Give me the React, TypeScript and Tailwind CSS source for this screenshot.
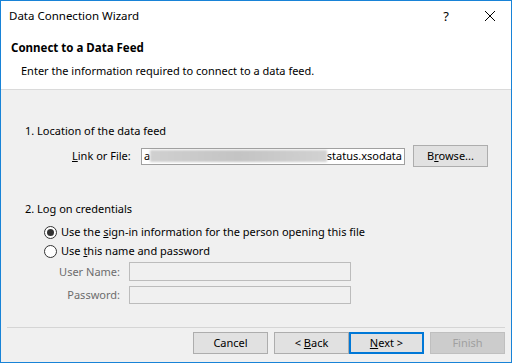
import React from 'react'

function Radio({ checked }: { checked?: boolean }) {
  return (
    <span className="flex h-[13px] w-[13px] items-center justify-center rounded-full border border-[#333333] bg-white">
      {checked && <span className="h-[7px] w-[7px] rounded-full bg-[#333333]" />}
    </span>
  )
}

function Btn({
  children,
  primary,
  disabled,
}: {
  children: React.ReactNode
  primary?: boolean
  disabled?: boolean
}) {
  return (
    <div
      className={
        disabled
          ? 'flex h-[22px] w-[75px] items-center justify-center border border-[#bfbfbf] bg-[#cccccc] text-[#a0a0a0]'
          : primary
            ? 'flex h-[22px] w-[75px] items-center justify-center border-2 border-[#0078d7] bg-[#e1e1e1]'
            : 'flex h-[22px] w-[75px] items-center justify-center border border-[#adadad] bg-[#e1e1e1]'
      }
    >
      <span>{children}</span>
    </div>
  )
}

export default function App() {
  return (
    <div
      className="flex h-[363px] w-[512px] flex-col border border-[#1883d7] bg-[#f0f0f0] text-[11px] leading-[16px] text-black"
      style={{ fontFamily: '"Noto Sans", "Open Sans", sans-serif' }}
    >
      {/* title + header (white) */}
      <div className="flex flex-col bg-white">
        <div className="flex h-[30px] items-center pl-[8px] text-[11.5px]">
          <span className="flex-1">Data Connection Wizard</span>
          <span className="w-[14px] text-center text-[13px]">?</span>
          <span className="ml-[30px] mr-[14px] flex h-[14px] w-[14px] items-center justify-center">
            <svg width="12" height="12" viewBox="0 0 12 12">
              <path d="M1 1 L11 11 M11 1 L1 11" stroke="#000" strokeWidth="1" />
            </svg>
          </span>
        </div>
        <div className="mt-[9px] pl-[10px] text-[11.5px] font-bold">Connect to a Data Feed</div>
        <div className="mt-[7px] pl-[20px]">Enter the information required to connect to a data feed.</div>
        <div className="mt-[10px] h-px bg-[#dadada]" />
      </div>

      {/* body */}
      <div className="flex flex-1 flex-col">
        <div className="mt-[33px] pl-[24px]">1. Location of the data feed</div>
        <div className="mt-[6px] flex items-center">
          <span className="ml-[71px] w-[69px]">
            <span className="underline">L</span>ink or File:
          </span>
          <div className="flex h-[17px] w-[264px] items-center overflow-hidden border border-[#a0a0a0] bg-white pl-[2px]">
            <span>a</span>
            <div className="h-[12px] flex-1 bg-gradient-to-r from-[#d0d0d0] via-[#c4c4c4] to-[#d2d2d2] blur-[1px]" />
            <span className="pr-[2px]">status.xsodata</span>
          </div>
          <div className="ml-[8px] flex h-[22px] w-[75px] items-center justify-center border border-[#adadad] bg-[#e1e1e1]">
            <span>
              B<span className="underline">r</span>owse...
            </span>
          </div>
        </div>

        <div className="mt-[34px] pl-[24px]">2. Log on credentials</div>
        <div className="mt-[7px] flex items-center pl-[43px]">
          <Radio checked />
          <span className="ml-[4px]">
            Use the <span className="underline">s</span>ign-in information for the person opening this file
          </span>
        </div>
        <div className="mt-[3px] flex items-center pl-[43px]">
          <Radio />
          <span className="ml-[4px]">
            Use <span className="underline">t</span>his name and password
          </span>
        </div>
        <div className="mt-[3px] flex items-center">
          <span className="w-[119px] text-right text-[#6d6d6d]">User Name:</span>
          <div className="ml-[9px] h-[19px] w-[222px] border border-[#bcbcbc] bg-[#f0f0f0]" />
        </div>
        <div className="mt-[5px] flex items-center">
          <span className="w-[119px] text-right text-[#6d6d6d]">Password:</span>
          <div className="ml-[9px] h-[18px] w-[222px] border border-[#bcbcbc] bg-[#f0f0f0]" />
        </div>

        <div className="mx-[6px] mt-[23px] h-px bg-[#d5d5d5]" />

        <div className="mt-[4px] flex items-center pl-[192px]">
          <Btn>Cancel</Btn>
          <div className="ml-[6px]">
            <Btn>
              &lt; <span className="underline">B</span>ack
            </Btn>
          </div>
          <Btn primary>
            <span className="underline">N</span>ext &gt;
          </Btn>
          <div className="ml-[6px]">
            <Btn disabled>Finish</Btn>
          </div>
        </div>
      </div>
    </div>
  )
}
